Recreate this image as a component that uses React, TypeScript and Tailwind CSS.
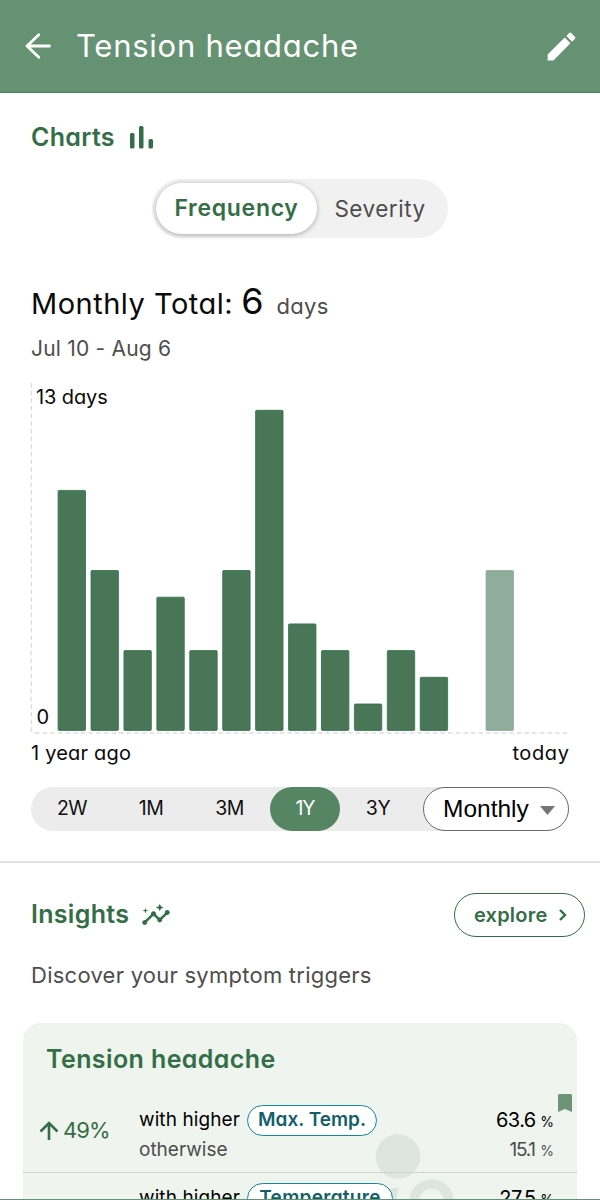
import { FC } from "react";
import { MdEdit, MdInsights } from "react-icons/md";

interface RangeOption {
  label: string;
  className: string;
}

interface InsightRowProps {
  trigger: string;
  triggerClass: string;
  higher: string;
  otherwise: string;
  change: string;
  bookmarked?: boolean;
}

const MONTHLY_DAYS = [9, 6, 3, 5, 3, 6, 12, 4, 3, 1, 3, 2, 0, 6];
const DAY_HEIGHT = 26.7;
const BAR_PITCH = 32.92;

const RANGES: RangeOption[] = [
  { label: "2W", className: "w-[82px] tracking-[-0.5px]" },
  { label: "1M", className: "w-[76px] tracking-[-0.5px]" },
  { label: "3M", className: "w-[81px] tracking-[-0.5px]" },
  {
    label: "1Y",
    className: "w-[70px] rounded-full bg-[#568564] text-white tracking-[-1px]",
  },
  { label: "3Y", className: "w-[76px] tracking-[-0.5px]" },
];

const Header: FC = () => (
  <header className="flex h-[93px] shrink-0 items-center border-b border-[#4b805c] bg-[#659272] pr-[20px] pl-[24px] text-white">
    <svg width="28" height="28" viewBox="0 0 28 28" fill="none">
      <path
        d="M25.5 14H3M14.8 2.8 3 14l11.8 11.2"
        stroke="currentColor"
        strokeWidth="2.8"
        strokeLinecap="round"
        strokeLinejoin="round"
      />
    </svg>
    <h1 className="ml-[24px] flex-1 text-[31px] tracking-[0.75px]">
      Tension headache
    </h1>
    <MdEdit size={37} />
  </header>
);

const ChartToggle: FC = () => (
  <div className="mx-auto mt-[25px] flex h-[59px] w-[296px] items-center rounded-full bg-[#f1f1f1] px-[4px] text-[22.5px]">
    <button className="h-[51px] w-[161px] rounded-full bg-white text-[23px] font-semibold tracking-[0.7px] text-[#346e46] shadow-[0_1px_5px_rgba(0,0,0,0.3)]">
      Frequency
    </button>
    <button className="flex-1 pr-[1px] tracking-[0.5px] text-[#4d4d4d]">
      Severity
    </button>
  </div>
);

const FrequencyChart: FC = () => (
  <svg
    className="-ml-[1px] block"
    width="541"
    height="390"
    viewBox="30 380 541 390"
  >
    <path
      d="M31.3 383V729q0 4 4 4H569"
      fill="none"
      stroke="#dedede"
      strokeWidth="1.4"
      strokeDasharray="4.6 3.05"
    />
    {MONTHLY_DAYS.map((days, i) => {
      const isCurrent = i === MONTHLY_DAYS.length - 1;
      if (days === 0) return null;

      return (
        <rect
          key={i}
          x={58.1 + i * BAR_PITCH}
          y={730.7 - days * DAY_HEIGHT}
          width="27.4"
          height={days * DAY_HEIGHT - 0.3}
          rx="1"
          fill={isCurrent ? "#90ac9a" : "#497656"}
          stroke={isCurrent ? "#8aa996" : "#2f7047"}
          strokeWidth="0.8"
        />
      );
    })}
    <g fontSize="20" fill="#0a0a0a">
      <text x="36" y="404" letterSpacing="-0.1">
        13 days
      </text>
      <text x="36.5" y="723.5">
        0
      </text>
      <text x="31" y="760" letterSpacing="0.2">
        1 year ago
      </text>
      <text x="569.5" y="760" textAnchor="end" letterSpacing="0.6">
        today
      </text>
    </g>
  </svg>
);

const RangePicker: FC = () => (
  <div className="mt-[17px] flex h-[44px] items-center rounded-full bg-[#ececec] text-[19.5px] text-[#111]">
    {RANGES.map(({ label, className }) => (
      <button key={label} className={`h-[44px] ${className}`}>
        {label}
      </button>
    ))}
    <button className="ml-auto flex h-[44px] w-[146px] items-center justify-between rounded-full border-[1.5px] border-[#6b6b6b] bg-white pr-[13px] pl-[19px] font-['Liberation_Sans',Arial,sans-serif] text-[24.5px] text-black">
      Monthly
      <svg width="15" height="9" viewBox="0 0 15 9" className="mt-[3px]">
        <path d="M0 0h15L7.5 9z" fill="#757575" />
      </svg>
    </button>
  </div>
);

const InsightRow: FC<InsightRowProps> = ({
  trigger,
  triggerClass,
  higher,
  otherwise,
  change,
  bookmarked,
}) => (
  <div className="relative flex h-[78px] border-b-[1.5px] border-[#cfd4d0] pt-[10px] pr-[23px] pl-[16px]">
    <div className="flex h-[51px] w-[100px] items-center text-[22px] text-[#346e46]">
      <svg width="20" height="20" viewBox="0 0 20 20" fill="none">
        <path
          d="M10 19V2M1.5 10.5 10 2l8.5 8.5"
          stroke="currentColor"
          strokeWidth="2.6"
        />
      </svg>
      <span className="ml-[4px] tracking-[-0.9px]">{change}</span>
    </div>
    <div className="flex-1 text-[19px]">
      <div className="flex h-[31px] items-center">
        <span className="tracking-[0.1px]">with higher</span>
        <span
          className={`ml-[7px] flex h-[31px] items-center justify-center rounded-full border-[1.5px] border-[#12889a] bg-white font-semibold text-[#125f6b] ${triggerClass}`}
        >
          {trigger}
        </span>
      </div>
      <div className="h-[28px] leading-[28px] text-[#4d4d4d]">otherwise</div>
    </div>
    <div className="text-right text-[20px]">
      <div className="h-[31px] leading-[31px]">
        <span className="tracking-[-0.6px]">{higher}</span>{" "}
        <span className="-ml-[1px] text-[14px]">%</span>
      </div>
      <div className="h-[28px] text-[19px] leading-[28px] text-[#4d4d4d]">
        <span className="tracking-[-1.2px]">{otherwise}</span>{" "}
        <span className="text-[14px]">%</span>
      </div>
    </div>
    {bookmarked && (
      <svg
        className="absolute -top-[1px] right-[5px]"
        width="14"
        height="18"
        viewBox="0 0 14 18"
      >
        <path
          d="M1.5 0h11Q14 0 14 1.5V18l-7-3-7 3V1.5Q0 0 1.5 0z"
          fill="#6e9377"
        />
      </svg>
    )}
  </div>
);

const Insights: FC = () => (
  <section className="flex-1 border-t-2 border-[#e0e0e0]">
    <div className="mt-[30px] flex h-[44px] items-center pr-[15px] pl-[31px] text-[#346e46]">
      <h2 className="text-[25px] font-semibold tracking-[0.3px]">Insights</h2>
      <MdInsights size={30} className="ml-[12px]" />
      <button className="ml-auto flex h-[44px] w-[131px] items-center justify-between rounded-full border-[1.5px] border-[#346e46] pr-[17px] pl-[19px] text-[20px] font-semibold tracking-[0.2px]">
        explore
        <svg width="8" height="12" viewBox="0 0 8 12" fill="none">
          <path d="m1 1 5 5-5 5" stroke="currentColor" strokeWidth="2.4" />
        </svg>
      </button>
    </div>
    <p className="mt-[22px] pl-[31px] text-[22px] leading-[32px] tracking-[0.25px] text-[#4d4d4d]">
      Discover your symptom triggers
    </p>
    <div className="relative mx-[23px] mt-[32px] h-[300px] rounded-[18px] bg-[#eff4ef]">
      <svg
        className="absolute top-[99px] left-[340px]"
        width="110"
        height="130"
        viewBox="363 1122 110 130"
      >
        <circle cx="398" cy="1156.5" r="22.3" fill="#dce6de" />
        <circle
          cx="431.5"
          cy="1201.5"
          r="17.5"
          fill="none"
          stroke="#dce6de"
          strokeWidth="9.5"
        />
        <path d="M388 1188h11l-5 20h-10z" fill="#dce6de" />
      </svg>
      <h3 className="relative h-[72px] pt-[20px] pl-[23px] text-[25px] leading-[32px] font-semibold tracking-[0.4px] text-[#346e46]">
        Tension headache
      </h3>
      <InsightRow
        trigger="Max. Temp."
        triggerClass="w-[130px]"
        change="49%"
        higher="63.6"
        otherwise="15.1"
        bookmarked
      />
      <InsightRow
        trigger="Temperature"
        triggerClass="w-[146px] tracking-[0.3px]"
        change="32%"
        higher="27.5"
        otherwise="20.8"
      />
    </div>
  </section>
);

export default function App() {
  return (
    <div className="flex h-[1200px] w-[600px] flex-col overflow-hidden bg-white font-[Inter,sans-serif] [font-feature-settings:'cv11']">
      <div className="flex h-[1199px] flex-col overflow-hidden">
        <Header />
        <section className="h-[768px] shrink-0 px-[31px] pt-[29px]">
          <div className="flex h-[32px] items-center text-[#346e46]">
            <h2 className="text-[25px] font-semibold tracking-[0.3px]">
              Charts
            </h2>
            <svg
              className="-mt-[2px] ml-[15px]"
              width="24"
              height="24"
              viewBox="0 0 24 24"
              fill="currentColor"
            >
              <rect x="0" y="8" width="4.5" height="15.5" rx="1.5" />
              <rect x="9" y="1" width="4.5" height="22.5" rx="1.5" />
              <rect x="18.5" y="14" width="4.5" height="9.5" rx="1.5" />
            </svg>
          </div>
          <ChartToggle />
          <div className="mt-[41px] flex h-[44px] items-baseline leading-[44px] text-[#0a0a0a]">
            <span className="text-[29px] tracking-[0.5px]">Monthly Total:</span>
            <span className="ml-[8px] text-[36px]">6</span>
            <span className="ml-[13px] text-[22px] tracking-[0.3px] text-[#4d4d4d]">
              days
            </span>
          </div>
          <p className="mt-[10px] h-[47px] text-[21px] leading-[32px] tracking-[0.2px] text-[#4d4d4d]">
            Jul 10 - Aug 6
          </p>
          <FrequencyChart />
          <RangePicker />
        </section>
        <Insights />
      </div>
      <div className="h-px bg-[#659272]" />
    </div>
  );
}
